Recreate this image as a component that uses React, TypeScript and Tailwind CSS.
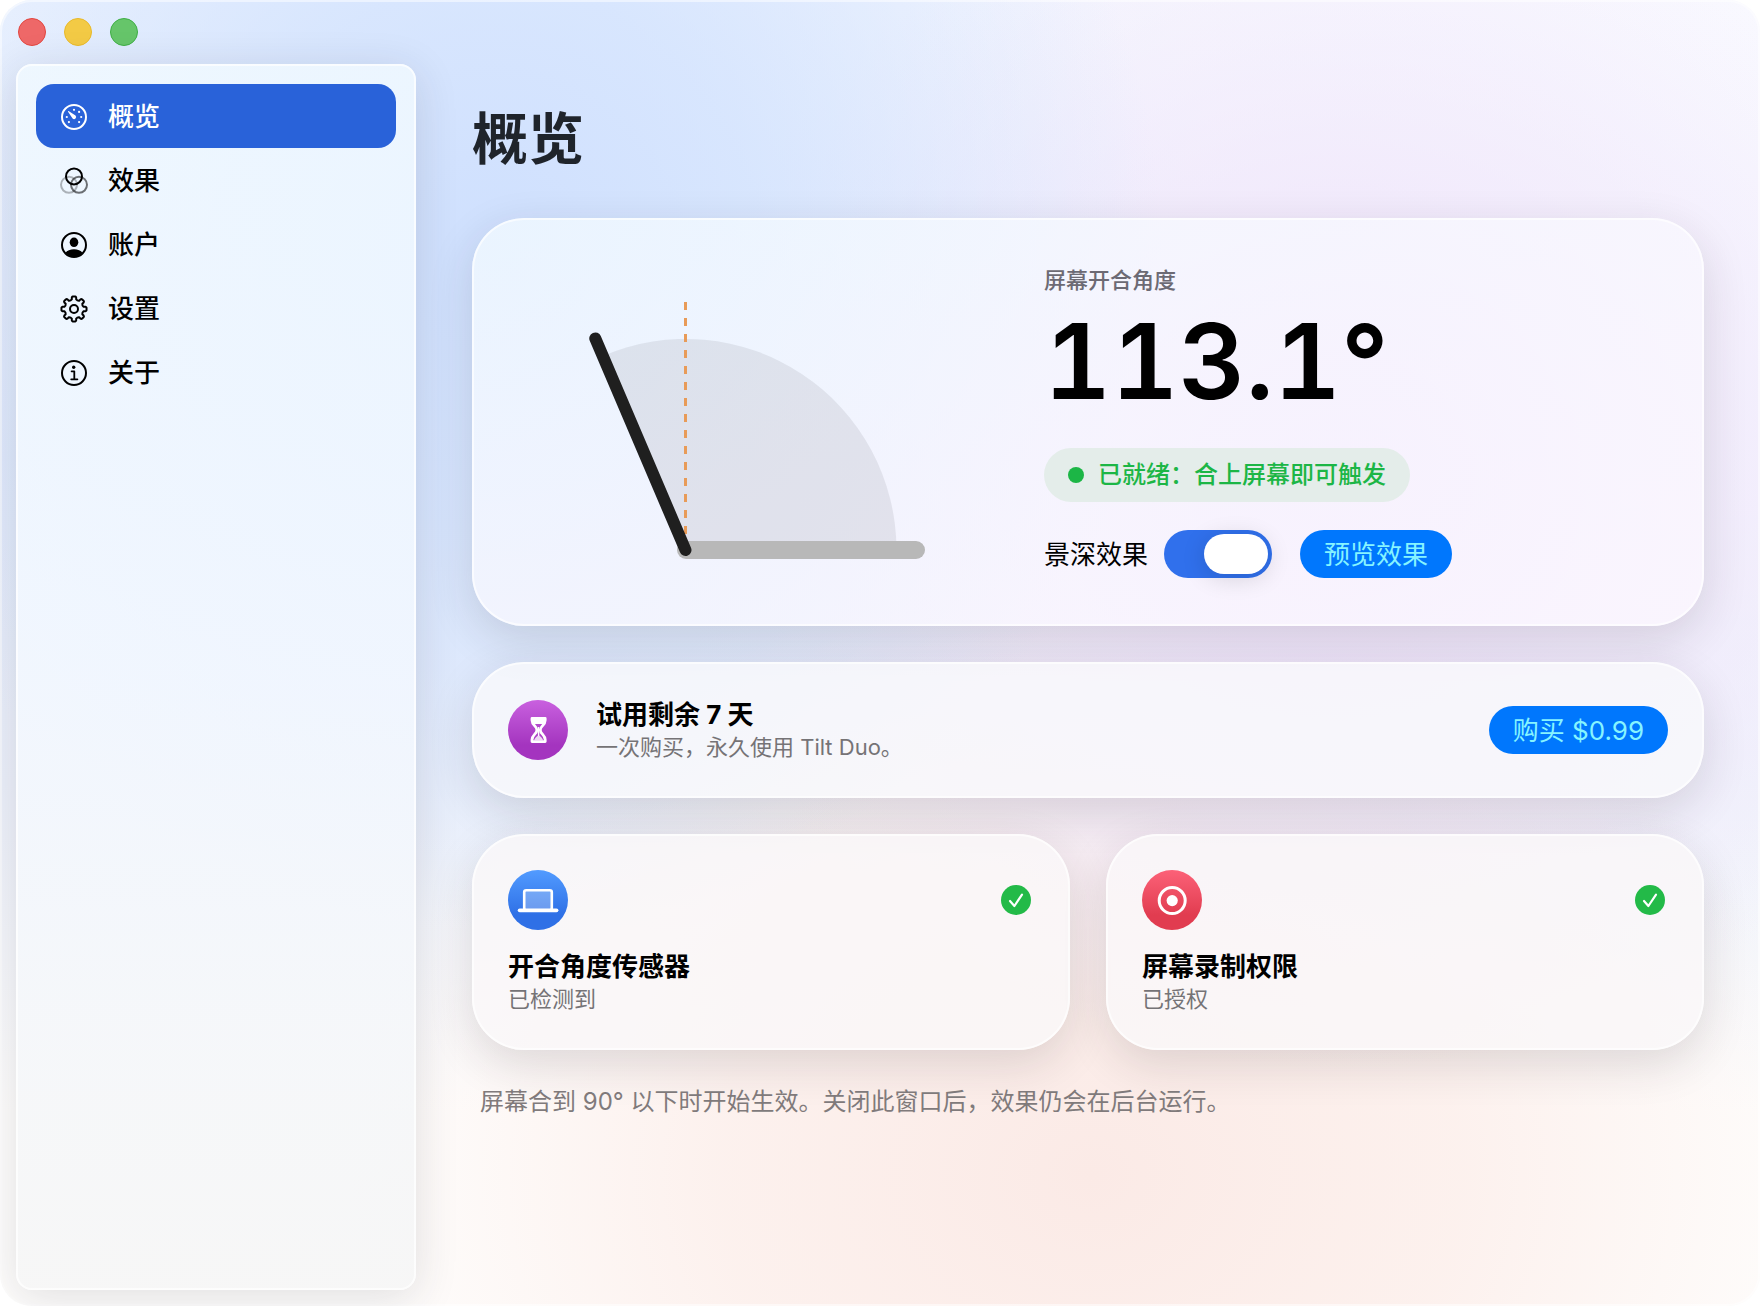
import { useState, type ReactNode } from "react";
import clsx from "clsx";

interface NavItem {
  id: string;
  label: string;
  icon: ReactNode;
}

const ANGLE = 113.1;

// Gear outline: eight teeth, drawn around (14, 14)
function gearPath() {
  const point = (radius: number, deg: number) => {
    const rad = (deg * Math.PI) / 180;
    return `${(14 + radius * Math.cos(rad)).toFixed(2)} ${(14 + radius * Math.sin(rad)).toFixed(2)}`;
  };
  let d = "";
  for (let i = 0; i < 8; i++) {
    const a = i * 45;
    d += `${i === 0 ? "M" : "L"}${point(9.8, a - 13)}`;
    d += `L${point(11.6, a - 11)}Q${point(12.6, a - 9)} ${point(12.6, a - 6)}`;
    d += `L${point(12.6, a + 6)}Q${point(12.6, a + 9)} ${point(11.6, a + 11)}`;
    d += `L${point(9.8, a + 13)}Q${point(8.8, a + 22.5)} ${point(9.8, a + 32)}`;
  }
  return d + "Z";
}

function GaugeIcon() {
  return (
    <svg viewBox="0 0 28 28" className="size-7 shrink-0" fill="none" aria-hidden="true">
      <circle cx="14" cy="14" r="12" stroke="currentColor" strokeWidth="2" />
      <g fill="currentColor">
        <circle cx="14" cy="6.8" r="1.1" />
        <circle cx="19.1" cy="8.9" r="1.1" />
        <circle cx="21.2" cy="14" r="1.1" />
        <circle cx="19.1" cy="19.1" r="1.1" />
        <circle cx="8.9" cy="19.1" r="1.1" />
        <circle cx="6.8" cy="14" r="1.1" />
        <path d="M8.2 8.9c-.5-.6.1-1.2.7-.7l6.6 4.4a2 2 0 1 1-2.9 2.9z" />
      </g>
    </svg>
  );
}

function FiltersIcon() {
  return (
    <svg viewBox="0 0 28 28" className="size-7 shrink-0" fill="none" stroke="currentColor" strokeWidth="2" aria-hidden="true">
      <circle cx="9" cy="17.8" r="8" opacity="0.28" />
      <circle cx="19" cy="17.8" r="8" opacity="0.55" />
      <circle cx="14" cy="9.4" r="8" />
    </svg>
  );
}

function PersonIcon() {
  return (
    <svg viewBox="0 0 28 28" className="size-7 shrink-0" fill="none" aria-hidden="true">
      <circle cx="14" cy="14" r="12" stroke="currentColor" strokeWidth="2" />
      <ellipse cx="14" cy="11.3" rx="4.3" ry="4.8" fill="currentColor" />
      <path d="M5.4 22c1.6-2.4 4.9-3.7 8.6-3.7s7 1.3 8.6 3.7a12 12 0 0 1-17.2 0z" fill="currentColor" />
    </svg>
  );
}

function GearIcon() {
  return (
    <svg viewBox="0 0 28 28" className="size-7 shrink-0" fill="none" stroke="currentColor" strokeWidth="2" strokeLinejoin="round" aria-hidden="true">
      <path d={gearPath()} />
      <circle cx="14" cy="14" r="4" />
    </svg>
  );
}

function InfoIcon() {
  return (
    <svg viewBox="0 0 28 28" className="size-7 shrink-0" fill="none" stroke="currentColor" strokeWidth="2" aria-hidden="true">
      <circle cx="14" cy="14" r="12" />
      <circle cx="13.7" cy="8.2" r="1.7" fill="currentColor" stroke="none" />
      <path d="M11.6 12.3h2.7v7.8M11.2 20.3h6.2" strokeWidth="1.8" strokeLinecap="round" strokeLinejoin="round" />
    </svg>
  );
}

function HourglassIcon() {
  return (
    <svg viewBox="0 0 60 60" className="size-full" fill="none" aria-hidden="true">
      <path
        d="M24 18.4h13.2v1.8c0 5-4.8 6-4.8 9.4v.8c0 3.4 4.8 4.4 4.8 9.4v1.8H24v-1.8c0-5 4.8-6 4.8-9.4v-.8c0-3.4-4.8-4.4-4.8-9.4z"
        stroke="#fff"
        strokeWidth="2.8"
        strokeLinejoin="round"
      />
      <path d="M23.5 17.8h14.2v3.4c-.3 1-.8 1.9-1.6 2.8h-11c-.8-.9-1.3-1.8-1.6-2.8z" fill="#fff" />
      <path d="M30.6 27v9" stroke="#fff" strokeWidth="1.4" />
      <path d="M26 40.5c.6-2.6 3-4.3 4.6-5.2 1.6.9 4 2.6 4.6 5.2z" fill="#fff" opacity="0.8" />
    </svg>
  );
}

function LaptopIcon() {
  return (
    <svg viewBox="0 0 60 60" className="size-full" fill="none" aria-hidden="true">
      <rect x="16.2" y="20.2" width="27.6" height="20" rx="2" fill="#fff" fillOpacity="0.28" stroke="#fff" strokeWidth="2.6" />
      <rect x="9.8" y="38.4" width="40.6" height="3.8" rx="1.9" fill="#fff" />
    </svg>
  );
}

function RecordIcon() {
  return (
    <svg viewBox="0 0 60 60" className="size-full" fill="none" aria-hidden="true">
      <circle cx="30.2" cy="30.6" r="13" stroke="#fff" strokeWidth="3" />
      <circle cx="30.2" cy="30.6" r="5.6" fill="#fff" />
    </svg>
  );
}

function CheckBadge() {
  return (
    <svg viewBox="0 0 30 30" className="mr-[3px] size-[30px]" fill="none" role="img" aria-label="正常">
      <circle cx="15" cy="15" r="15" fill="#23ba48" />
      <path d="M9 16l4.4 5L21 9.6" stroke="#fff" strokeWidth="2.2" strokeLinecap="round" strokeLinejoin="round" />
    </svg>
  );
}

const navItems: NavItem[] = [
  { id: "overview", label: "概览", icon: <GaugeIcon /> },
  { id: "effects", label: "效果", icon: <FiltersIcon /> },
  { id: "account", label: "账户", icon: <PersonIcon /> },
  { id: "settings", label: "设置", icon: <GearIcon /> },
  { id: "about", label: "关于", icon: <InfoIcon /> },
];

function Card({ className, children }: { className: string; children: ReactNode }) {
  return (
    <section
      className={clsx(
        "rounded-[52px] shadow-[0_14px_46px_rgba(40,35,45,0.14),inset_0_0_0_2px_rgba(255,255,255,0.65)]",
        className,
      )}
    >
      {children}
    </section>
  );
}

function HingeDiagram({ angle }: { angle: number }) {
  const rad = (angle * Math.PI) / 180;
  const cx = 177.5;
  const cy = 284;
  const radius = 211;
  const lid = 230;
  const ex = cx + radius * Math.cos(rad);
  const ey = cy - radius * Math.sin(rad);

  return (
    <svg viewBox="0 0 500 312" className="w-full" fill="none" aria-hidden="true">
      <path d={`M${cx} ${cy}H${cx + radius}A${radius} ${radius} 0 0 0 ${ex} ${ey}Z`} fill="#000" fillOpacity="0.07" />
      <path d={`M${cx + 0.5} ${cy}H408`} stroke="#b8b8b8" strokeWidth="18" strokeLinecap="round" />
      <path d={`M${cx} 36V${cy - 14}`} stroke="#e89b58" strokeWidth="3" strokeDasharray="8 8" />
      <path
        d={`M${cx} ${cy}L${cx + lid * Math.cos(rad)} ${cy - lid * Math.sin(rad)}`}
        stroke="#1f1f1f"
        strokeWidth="12"
        strokeLinecap="round"
      />
    </svg>
  );
}

function PillButton({ children }: { children: ReactNode }) {
  return (
    <button type="button" className="h-12 shrink-0 rounded-full bg-[#0077fd] px-6 pt-0.5 text-[26px] leading-8 text-[#86f4ff]">
      {children}
    </button>
  );
}

function StatusCard({ title, detail, tint, icon }: { title: string; detail: string; tint: string; icon: ReactNode }) {
  return (
    <Card className="bg-[#faf8f9]/80 p-9">
      <div className="flex items-center justify-between">
        <div className={clsx("size-15 rounded-full bg-linear-to-b", tint)}>{icon}</div>
        <CheckBadge />
      </div>
      <h2 className="mt-5 text-[26px] leading-[34px] font-bold text-black">{title}</h2>
      <p className="text-[22px] leading-[30px] text-[#757376]">{detail}</p>
    </Card>
  );
}

export default function App() {
  const [active, setActive] = useState("overview");
  const [depth, setDepth] = useState(true);

  return (
    <div className="min-h-screen bg-white font-[Inter,'Noto_Sans_CJK_SC',sans-serif]">
      <div className="flex min-h-screen flex-col overflow-hidden rounded-[32px] bg-[radial-gradient(ellipse_38%_52%_at_28%_19%,#cfe0fe_0%,#d3e3fecc_40%,#dbe8fe00_100%),radial-gradient(ellipse_38%_46%_at_76%_36%,#eddffa_0%,#f0e6fbbb_45%,#f4eefc00_100%),radial-gradient(ellipse_42%_46%_at_62%_90%,#fbeae6_0%,#fceeeacc_50%,#fdf6f200_100%),radial-gradient(ellipse_65%_75%_at_100%_0%,#f9f9ff_0%,#f9f8fecc_50%,#f9f8fe00_100%),linear-gradient(to_bottom,#edf3fe_0%,#e3ebfb_35%,#ecf0fa_60%,#fefdfc_85%)] shadow-[inset_0_0_0_2px_rgba(255,255,255,0.5)]">
        {/* Title bar */}
        <header className="flex h-16 items-center gap-[18px] px-[18px]">
          <button type="button" aria-label="关闭" className="size-7 rounded-full border border-[#e2463f] bg-[#ee6868]" />
          <button type="button" aria-label="最小化" className="size-7 rounded-full border border-[#e8b92a] bg-[#f3ca45]" />
          <button type="button" aria-label="缩放" className="size-7 rounded-full border border-[#3fae45] bg-[#66c56a]" />
        </header>

        <div className="flex flex-1 pb-4 pl-4">
          {/* Sidebar */}
          <nav className="w-[400px] shrink-0 rounded-2xl bg-linear-to-b from-[#f0f9ff]/85 via-[#f3f8ff]/85 to-[#f6f6f6]/90 p-5 shadow-[0_8px_44px_rgba(40,40,55,0.14),inset_0_0_0_2px_rgba(255,255,255,0.7)]">
            {navItems.map((item) => (
              <button
                key={item.id}
                type="button"
                onClick={() => setActive(item.id)}
                className={clsx(
                  "flex h-16 w-full items-center gap-5 rounded-[18px] px-6 pt-0.5 text-[26px] leading-8 font-medium",
                  active === item.id ? "bg-[#2962d9] text-white" : "text-black",
                )}
              >
                {item.icon}
                {item.label}
              </button>
            ))}
          </nav>

          {/* Content */}
          <main className="flex min-w-0 flex-1 flex-col px-14 pt-[38px]">
            <h1 className="text-[56px] leading-[74px] font-bold text-[#1f242b]">概览</h1>

            <div className="mt-[42px] flex flex-col gap-9">
              <Card className="flex items-center gap-9 bg-linear-to-br from-[#f3fbff]/75 via-[#f9f8ff]/75 to-[#fdf8ff]/75 px-9 py-12">
                <div className="w-[500px]">
                  <HingeDiagram angle={ANGLE} />
                </div>
                <div className="flex flex-1 flex-col items-start">
                  <p className="text-[22px] leading-7 font-medium text-[#6c6a74]">屏幕开合角度</p>
                  <p className="mt-[7px] text-[104px] leading-[120px] font-semibold text-black tabular-nums">{ANGLE}°</p>
                  <div className="mt-[27px] flex h-[54px] items-center gap-[14px] rounded-full bg-[#e4edea] px-6 text-2xl font-medium text-[#1cb646]">
                    <span className="size-4 rounded-full bg-[#1cb646]" />
                    已就绪：合上屏幕即可触发
                  </div>
                  <div className="mt-7 flex items-center">
                    <label htmlFor="depth" className="pt-0.5 text-[26px] leading-8 text-black">
                      景深效果
                    </label>
                    <input
                      id="depth"
                      type="checkbox"
                      role="switch"
                      checked={depth}
                      onChange={(e) => setDepth(e.target.checked)}
                      className="mr-7 ml-4 flex h-12 w-[108px] appearance-none items-center rounded-full bg-[#c9c9ce] px-1 before:h-10 before:w-16 before:rounded-full before:bg-white before:shadow-[0_4px_24px_rgba(0,0,0,0.14)] checked:justify-end checked:bg-[#3070ec]"
                    />
                    <PillButton>预览效果</PillButton>
                  </div>
                </div>
              </Card>

              <Card className="flex items-center bg-[#f9f9fb]/80 p-9">
                <div className="size-15 shrink-0 rounded-full bg-linear-to-b from-[#c960df] to-[#a434bf] to-75%">
                  <HourglassIcon />
                </div>
                <div className="ml-7 flex-1">
                  <h2 className="text-[26px] leading-[34px] font-bold text-black">试用剩余 7 天</h2>
                  <p className="text-[22px] leading-[30px] text-[#757376]">一次购买，永久使用 Tilt Duo。</p>
                </div>
                <PillButton>购买 $0.99</PillButton>
              </Card>

              <div className="grid grid-cols-2 gap-9">
                <StatusCard
                  title="开合角度传感器"
                  detail="已检测到"
                  tint="from-[#529bff] to-[#2f70e6] to-75%"
                  icon={<LaptopIcon />}
                />
                <StatusCard
                  title="屏幕录制权限"
                  detail="已授权"
                  tint="from-[#fc6178] to-[#e13c50] to-75%"
                  icon={<RecordIcon />}
                />
              </div>

              <p className="px-2 text-2xl leading-8 text-[#807a7b]">
                屏幕合到 90° 以下时开始生效。关闭此窗口后，效果仍会在后台运行。
              </p>
            </div>
          </main>
        </div>
      </div>
    </div>
  );
}
